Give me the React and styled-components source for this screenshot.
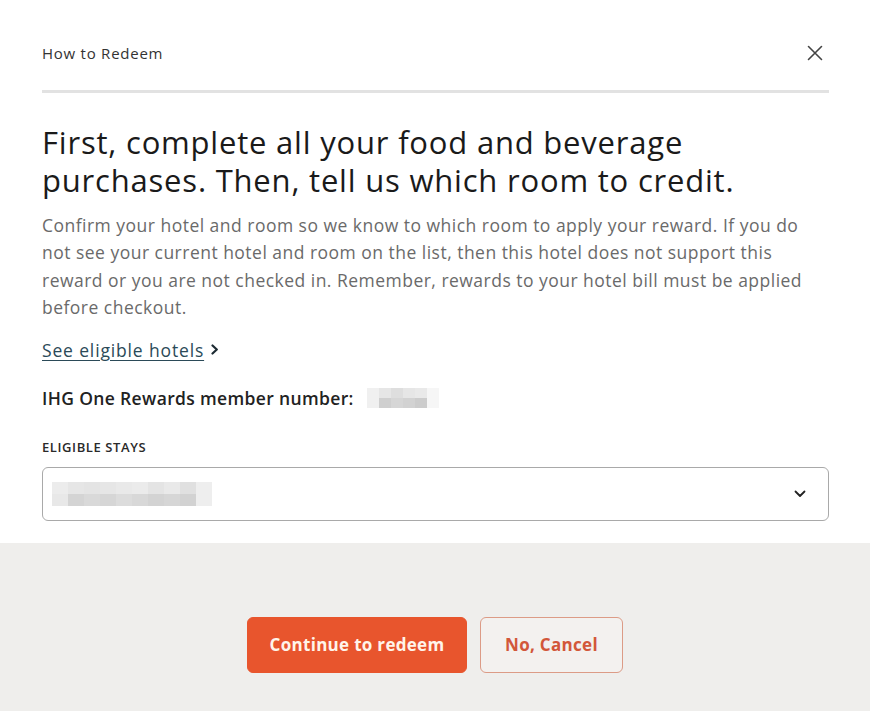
import React from "react";
import styled, { createGlobalStyle } from "styled-components";

const Global = createGlobalStyle`
  html, body { margin: 0; padding: 0; background: #ffffff; }
  body { font-family: "Open Sans", "Noto Sans", sans-serif; -webkit-font-smoothing: antialiased; }
  * { box-sizing: border-box; }
`;

const Page = styled.div`
  width: 870px;
  min-height: 711px;
  display: flex;
  flex-direction: column;
  background: #fff;
`;

const Body = styled.div`
  padding: 0 41px 0 42px;
  display: flex;
  flex-direction: column;
`;

const Header = styled.div`
  display: flex;
  align-items: center;
  justify-content: space-between;
  padding: 42px 0 26px;
  border-bottom: 3px solid #e2e2e2;
`;

const HeaderTitle = styled.div`
  font-size: 15px;
  line-height: 22px;
  color: #333;
  letter-spacing: 0.75px;
`;

const CloseButton = styled.button`
  border: 0;
  background: none;
  padding: 0;
  margin-right: 6px;
  width: 16px;
  height: 16px;
  display: flex;
  align-items: center;
  justify-content: center;
  cursor: pointer;
`;

const Heading = styled.h1`
  margin: 30px 0 0;
  font-weight: 400;
  font-size: 31px;
  line-height: 38px;
  color: #1a1a1a;
  letter-spacing: 0.8px;
`;

const Paragraph = styled.p`
  margin: 13px 0 0;
  font-size: 17.5px;
  line-height: 27.4px;
  color: #6a6a6a;
  letter-spacing: 0.48px;
`;

const LinkRow = styled.a`
  margin-top: 16px;
  display: inline-flex;
  align-items: center;
  gap: 7px;
  align-self: flex-start;
  font-size: 17.5px;
  line-height: 24px;
  font-weight: 500;
  color: #2b4a58;
  letter-spacing: 0.85px;
  text-decoration: none;
  cursor: pointer;
`;

const LinkText = styled.span`
  text-decoration: underline;
  text-underline-offset: 3px;
  text-decoration-thickness: 1px;
`;

const MemberRow = styled.div`
  margin-top: 24px;
  display: flex;
  align-items: center;
  gap: 13px;
  font-size: 17.5px;
  line-height: 24px;
  font-weight: 600;
  color: #222;
  letter-spacing: 0.35px;
`;

const Redacted = styled.div`
  display: grid;
  grid-template-columns: repeat(${(p) => p.$cols}, ${(p) => p.$cell}px);
  grid-auto-rows: ${(p) => p.$row}px;
`;

const Cell = styled.div`
  background: ${(p) => p.$c};
`;

const FieldLabel = styled.div`
  margin-top: 28px;
  font-size: 13px;
  line-height: 18px;
  font-weight: 600;
  color: #2a2a2a;
  letter-spacing: 0.6px;
`;

const Select = styled.div`
  margin-top: 11px;
  height: 54px;
  border: 1.5px solid #a9a9a9;
  border-radius: 6px;
  display: flex;
  align-items: center;
  justify-content: space-between;
  padding: 0 22px 0 9px;
`;

const Footer = styled.div`
  margin-top: 22px;
  flex: 1;
  background: #efeeec;
  display: flex;
  justify-content: center;
  align-items: flex-start;
  gap: 13px;
  padding-top: 74px;
  min-height: 168px;
`;

const Button = styled.button`
  height: 56px;
  width: ${(p) => p.$w}px;
  border-radius: 6px;
  font-family: "Open Sans", "Noto Sans", sans-serif;
  font-size: 17px;
  font-weight: 700;
  cursor: pointer;
  background: ${(p) => (p.$primary ? "#e8552d" : "#f3f1ef")};
  color: ${(p) => (p.$primary ? "#fff4ea" : "#d2573a")};
  border: 1.5px solid ${(p) => (p.$primary ? "#e8552d" : "#dc9b86")};
  letter-spacing: 0.3px;
`;

const memberCells = [
  ["#f0f0f0", "#e6e6e6", "#dedede", "#e6e6e6", "#e9e9e9", "#f6f6f6"],
  ["#f0f0f0", "#cfcfcf", "#d6d6d6", "#d2d2d2", "#cccccc", "#f6f6f6"],
];

const stayCells = [
  ["#ececec", "#e6e6e6", "#e4e4e4", "#e6e6e6", "#e9e9e9", "#ebebeb", "#e4e4e4", "#e9e9e9", "#e0e0e0", "#eeeeee"],
  ["#e8e8e8", "#d4d4d4", "#d9d9d9", "#d6d6d6", "#dcdcdc", "#d8d8d8", "#d3d3d3", "#d6d6d6", "#d2d2d2", "#eeeeee"],
];

function Pixelated({ rows, cell, row }) {
  return (
    <Redacted $cols={rows[0].length} $cell={cell} $row={row}>
      {rows.flat().map((c, i) => (
        <Cell key={i} $c={c} />
      ))}
    </Redacted>
  );
}

export default function App() {
  return (
    <Page>
      <Global />
      <Body>
        <Header>
          <HeaderTitle>How to Redeem</HeaderTitle>
          <CloseButton aria-label="Close">
            <svg width="16" height="16" viewBox="0 0 16 16">
              <path d="M1.5 1.5 L14.5 14.5 M14.5 1.5 L1.5 14.5" stroke="#444" strokeWidth="1.6" strokeLinecap="round" />
            </svg>
          </CloseButton>
        </Header>
        <Heading>
          First, complete all your food and beverage
          <br />
          purchases. Then, tell us which room to credit.
        </Heading>
        <Paragraph>
          Confirm your hotel and room so we know to which room to apply your reward. If you do
          <br />
          not see your current hotel and room on the list, then this hotel does not support this
          <br />
          reward or you are not checked in. Remember, rewards to your hotel bill must be applied
          <br />
          before checkout.
        </Paragraph>
        <LinkRow>
          <LinkText>See eligible hotels</LinkText>
          <svg width="8" height="11" viewBox="0 0 8 11">
            <path d="M1.5 1.5 L5.8 5.5 L1.5 9.5" stroke="#1d2b33" strokeWidth="2.2" fill="none" strokeLinecap="round" strokeLinejoin="round" />
          </svg>
        </LinkRow>
        <MemberRow>
          IHG One Rewards member number:
          <Pixelated rows={memberCells} cell={12} row={10} />
        </MemberRow>
        <FieldLabel>ELIGIBLE STAYS</FieldLabel>
        <Select>
          <Pixelated rows={stayCells} cell={16} row={12} />
          <svg width="12" height="8" viewBox="0 0 12 8">
            <path d="M1.5 1.5 L6 6 L10.5 1.5" stroke="#222" strokeWidth="1.8" fill="none" strokeLinecap="round" strokeLinejoin="round" />
          </svg>
        </Select>
      </Body>
      <Footer>
        <Button $primary $w={220}>Continue to redeem</Button>
        <Button $w={143}>No, Cancel</Button>
      </Footer>
    </Page>
  );
}
